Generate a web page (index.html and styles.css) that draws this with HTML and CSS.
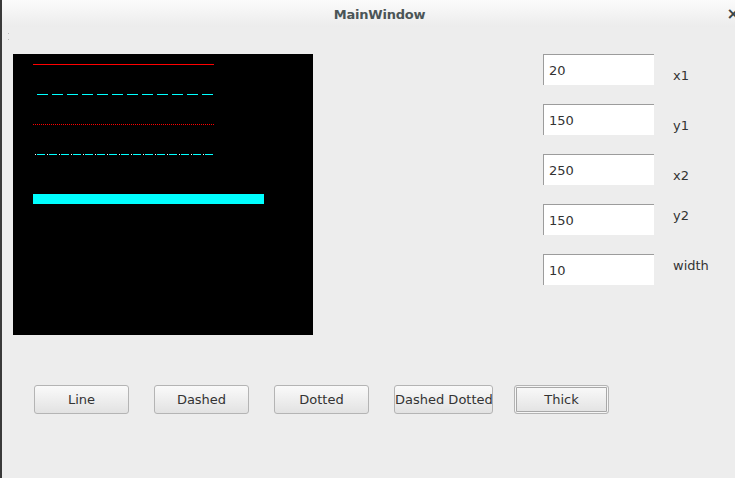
FILE: index.html
```html
<!DOCTYPE html>
<html>
<head>
<meta charset="utf-8">
<link rel="stylesheet" href="styles.css">
</head>
<body>
<div class="window">
  <div class="titlebar">
    <span class="title">MainWindow</span>
    <span class="close">×</span>
  </div>
  <div class="grip"></div>
  <div class="main">
    <div class="canvas">
      <svg width="300" height="281" viewBox="0 0 300 281">
        <rect x="0" y="0" width="300" height="281" fill="#000"/>
        <line x1="20" y1="10.5" x2="201" y2="10.5" stroke="#ff0000" stroke-width="1"/>
        <line x1="24" y1="40.5" x2="201" y2="40.5" stroke="#00ffff" stroke-width="1" stroke-dasharray="11 4"/>
        <line x1="20" y1="70.5" x2="201" y2="70.5" stroke="#ff0000" stroke-width="1" stroke-dasharray="1 1"/>
        <line x1="24" y1="100.5" x2="200" y2="100.5" stroke="#00ffff" stroke-width="1" stroke-dasharray="8 4"/>
        <line x1="22" y1="100.5" x2="191" y2="100.5" stroke="#ffffff" stroke-width="1" stroke-dasharray="1 11"/>
        <rect x="20" y="140" width="231" height="10" fill="#00ffff"/>
      </svg>
    </div>
    <div class="fields">
      <input class="field" type="text" value="20"><span class="label lower">x1</span>
      <input class="field" type="text" value="150"><span class="label lower">y1</span>
      <input class="field" type="text" value="250"><span class="label lower">x2</span>
      <input class="field" type="text" value="150"><span class="label upper">y2</span>
      <input class="field" type="text" value="10"><span class="label upper">width</span>
    </div>
  </div>
  <div class="buttons">
    <button class="btn">Line</button>
    <button class="btn">Dashed</button>
    <button class="btn">Dotted</button>
    <button class="btn wide">Dashed Dotted</button>
    <button class="btn focused">Thick</button>
  </div>
</div>
</body>
</html>
```

FILE: styles.css
```css
html, body {
  margin: 0;
  padding: 0;
  width: 735px;
  height: 478px;
  overflow: hidden;
  background: #ededed;
  font-family: "DejaVu Sans", sans-serif;
  font-size: 13px;
  color: #333;
}

.window {
  position: relative;
  height: 478px;
  box-sizing: border-box;
  border-left: 2px solid #3a3a3a;
  background: #ededed;
}

.titlebar {
  position: relative;
  height: 27px;
  padding-left: 22px;
  display: flex;
  align-items: center;
  justify-content: center;
  background: linear-gradient(#fbfbfb, #ececec);
}

.title {
  font-weight: bold;
  color: #4b5557;
  font-size: 13px;
  letter-spacing: -0.2px;
  margin-top: 1px;
}

.close {
  position: absolute;
  right: -5px;
  top: 4px;
  font-weight: bold;
  font-size: 16px;
  color: #3b4547;
}

.grip {
  position: absolute;
  left: 6px;
  top: 33px;
  width: 1px;
  height: 5px;
  border-top: 1px dotted #bbb;
  border-bottom: 1px dotted #bbb;
}

.main {
  display: flex;
  padding-top: 27px;
  padding-left: 11px;
}

.canvas {
  width: 300px;
  height: 281px;
  line-height: 0;
}

.canvas svg {
  display: block;
}

.fields {
  margin-left: 230px;
  display: grid;
  grid-template-columns: 111px auto;
  grid-auto-rows: 31px;
  column-gap: 19px;
  row-gap: 19px;
  align-content: start;
}

.field {
  box-sizing: border-box;
  width: 111px;
  height: 31px;
  margin: 0;
  padding: 1px 0 0 5px;
  border: none;
  border-top: 1px solid #9c9c9c;
  border-left: 1px solid #9c9c9c;
  background: #fff;
  font-family: "DejaVu Sans", sans-serif;
  font-size: 13px;
  color: #333;
  outline: none;
}

.label {
  align-self: center;
  color: #333;
}

.label.lower {
  padding-top: 11px;
}

.label.upper {
  padding-bottom: 9px;
}

.buttons {
  display: grid;
  grid-template-columns: repeat(5, 120px);
  padding-left: 32px;
  margin-top: 50px;
}

.btn {
  box-sizing: border-box;
  width: 95px;
  height: 29px;
  margin: 0;
  padding: 0;
  border: 1px solid #b4b4b4;
  border-radius: 3px;
  background: linear-gradient(#fafafa, #e2e2e2);
  font-family: "DejaVu Sans", sans-serif;
  font-size: 13px;
  color: #333;
  white-space: nowrap;
}

.btn.wide {
  width: 99px;
}

.btn.focused {
  box-shadow: inset 0 0 0 1px #f6f6f6, inset 0 0 0 2px #a8a8a8;
}
```
